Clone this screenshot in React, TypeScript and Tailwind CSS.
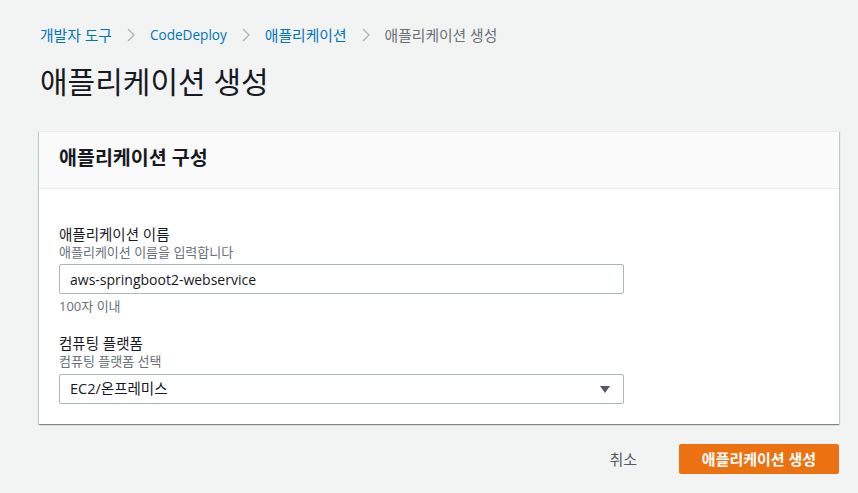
import React from 'react';

const font = "font-['Open_Sans','Noto_Sans_CJK_KR',sans-serif]";

function Chevron() {
  return (
    <svg width="8" height="14" viewBox="0 0 8 14" className="mx-[15px] shrink-0">
      <polyline points="1,1 7,7 1,13" fill="none" stroke="#aab7b8" strokeWidth="1.4" />
    </svg>
  );
}

function Breadcrumbs() {
  const links = ['개발자 도구', 'CodeDeploy', '애플리케이션'];
  return (
    <nav className="flex items-center text-[14.8px] leading-[20px]">
      {links.map(label => (
        <React.Fragment key={label}>
          <a className={label === 'CodeDeploy' ? 'text-[#0073bb] text-[13.6px] cursor-pointer' : 'text-[#0073bb] cursor-pointer'}>
            {label}
          </a>
          <Chevron />
        </React.Fragment>
      ))}
      <span className="text-[#687078]">애플리케이션 생성</span>
    </nav>
  );
}

interface FieldProps {
  label: string;
  description: string;
  children: React.ReactNode;
}

function Field({ label, description, children }: FieldProps) {
  return (
    <div className="flex flex-col">
      <label className="text-[14.5px] leading-[18px] text-[#16191f]">{label}</label>
      <span className="text-[13px] leading-[16px] text-[#687078]">{description}</span>
      {children}
    </div>
  );
}

export default function App() {
  return (
    <div className={`min-h-screen w-full bg-[#f2f3f3] pl-[39px] pr-[19px] pt-[25px] ${font}`}>
      <div className="pl-[1px]">
        <Breadcrumbs />
        <h1 className="mt-[19px] text-[30px] leading-[36px] font-normal text-[#16191f]">
          애플리케이션 생성
        </h1>
      </div>

      <div className="mt-[31px] bg-white border-t border-[#eaeded] shadow-[0_1px_1px_0_rgba(0,28,36,0.3),1px_1px_1px_0_rgba(0,28,36,0.15),-1px_1px_1px_0_rgba(0,28,36,0.15)]">
        <div className="h-[57px] bg-[#fafafa] border-b border-[#eaeded] px-[20px] pt-[14px]">
          <h2 className="text-[19.5px] leading-[24px] font-bold text-[#16191f]">애플리케이션 구성</h2>
        </div>

        <div className="px-[20px] pt-[37px] pb-[20px]">
          <Field label="애플리케이션 이름" description="애플리케이션 이름을 입력합니다">
            <input
              className="mt-[4px] w-[565px] h-[30px] border border-[#aab7b8] rounded-[2px] px-[10px] text-[14px] text-[#16191f] outline-none"
              defaultValue="aws-springboot2-webservice"
            />
            <span className="mt-[4px] text-[13px] leading-[16px] text-[#687078]">100자 이내</span>
          </Field>

          <div className="mt-[21px]">
            <Field label="컴퓨팅 플랫폼" description="컴퓨팅 플랫폼 선택">
              <div className="mt-[5px] w-[565px] h-[30px] border border-[#aab7b8] rounded-[2px] pl-[10px] pr-[13px] flex items-center justify-between text-[14.5px] text-[#16191f]">
                <span>EC2/온프레미스</span>
                <svg width="10" height="7" viewBox="0 0 10 7">
                  <polygon points="0,0 10,0 5,7" fill="#545b64" />
                </svg>
              </div>
            </Field>
          </div>
        </div>
      </div>

      <div className="mt-[20px] flex items-center justify-end">
        <button className="px-[20px] h-[30px] text-[15px] text-[#545b64]">취소</button>
        <button className="ml-[22px] w-[160px] h-[30px] rounded-[2px] bg-[#ec7211] text-white text-[15px] font-bold">
          애플리케이션 생성
        </button>
      </div>
    </div>
  );
}
